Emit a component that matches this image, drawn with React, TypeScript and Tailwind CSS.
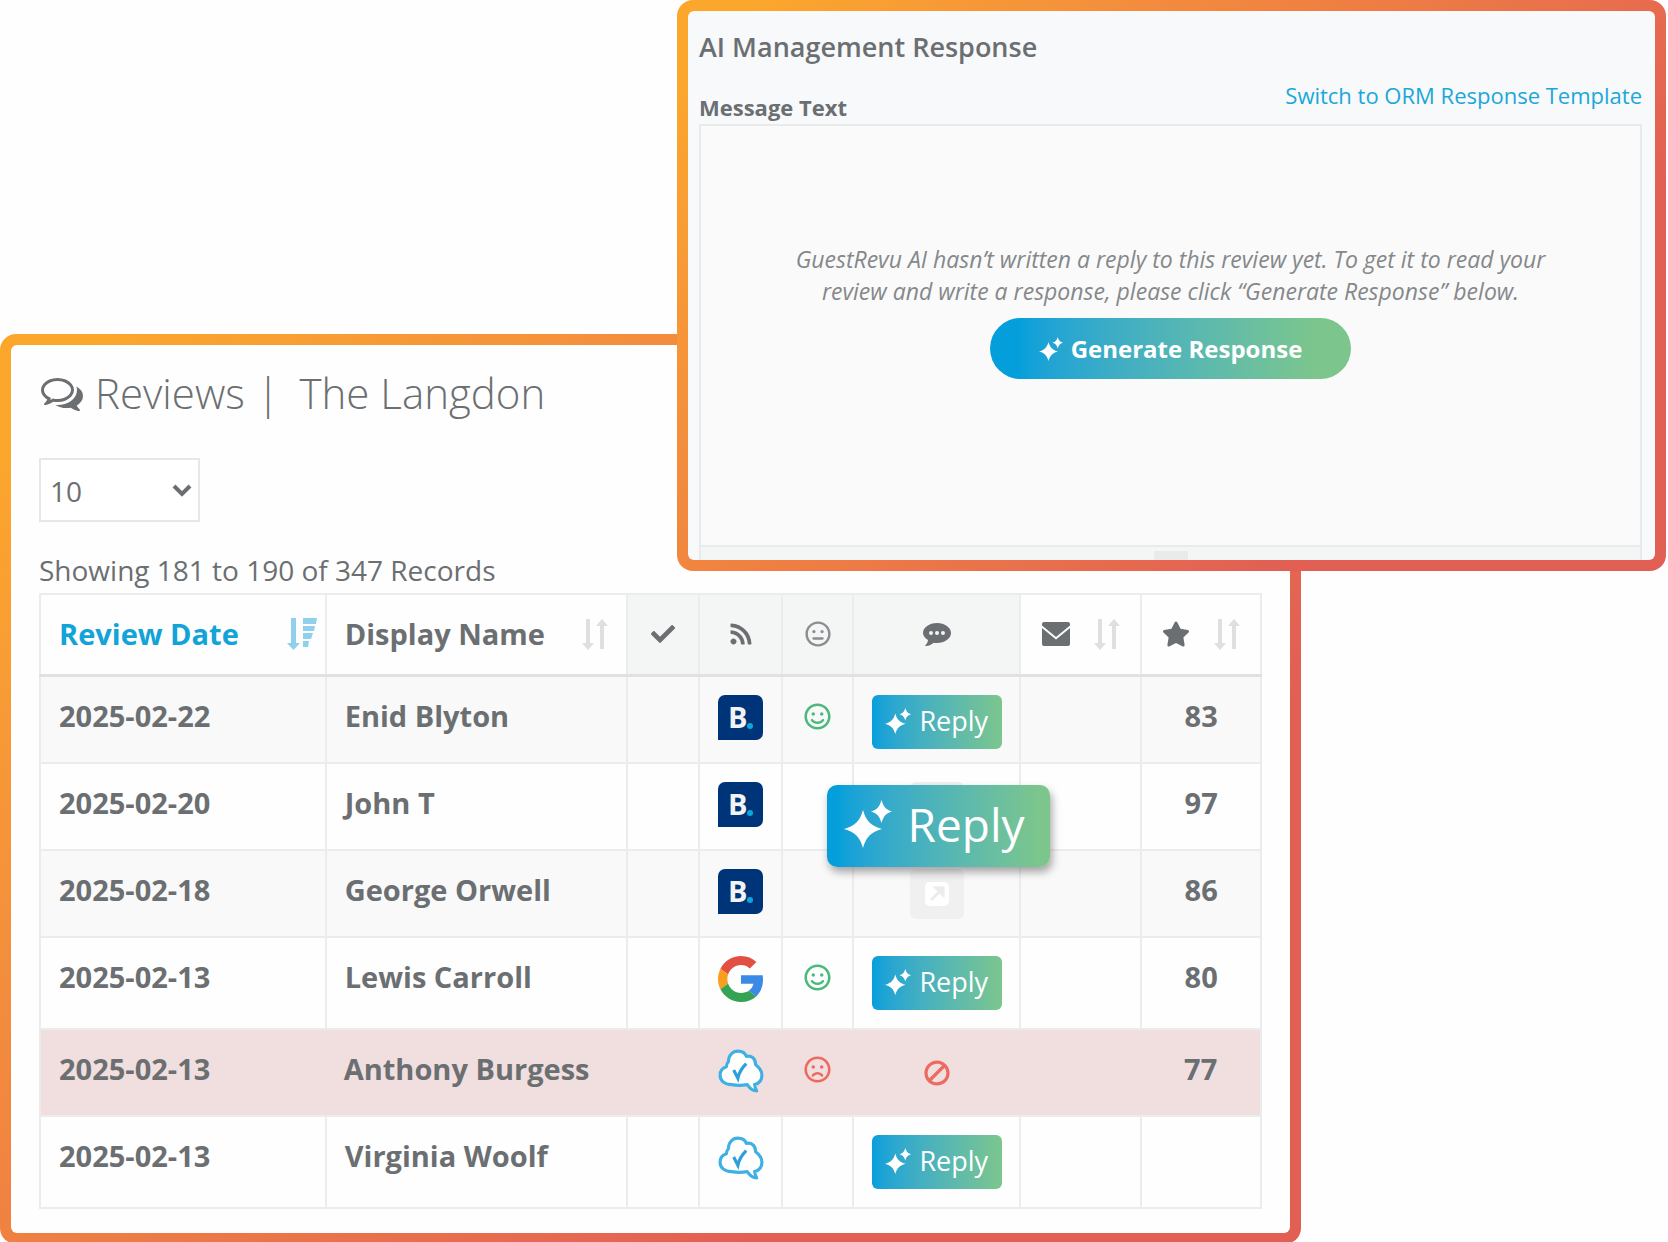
import { type ReactNode } from "react"
import { FaBan, FaCheck, FaRegFrown, FaRegMeh, FaRegSmile, FaRss, FaStar } from "react-icons/fa"

type Source = "booking" | "google" | "revu"
type Action = "reply" | "link" | "blocked"

interface Review {
  date: string
  name: string
  source: Source
  mood?: "happy" | "sad"
  action: Action
  score?: number
  tall?: boolean
}

const REVIEWS: Review[] = [
  { date: "2025-02-22", name: "Enid Blyton", source: "booking", mood: "happy", action: "reply", score: 83 },
  { date: "2025-02-20", name: "John T", source: "booking", action: "link", score: 97 },
  { date: "2025-02-18", name: "George Orwell", source: "booking", action: "link", score: 86 },
  { date: "2025-02-13", name: "Lewis Carroll", source: "google", mood: "happy", action: "reply", score: 80, tall: true },
  { date: "2025-02-13", name: "Anthony Burgess", source: "revu", mood: "sad", action: "blocked", score: 77 },
  { date: "2025-02-13", name: "Virginia Woolf", source: "revu", action: "reply", tall: true },
]

function Sparkles({ className }: { className?: string }) {
  return (
    <svg viewBox="0 0 48 48" fill="currentColor" aria-hidden="true" className={className}>
      <path d="M19 10c3 11 8 16 19 19-11 3-16 8-19 19-3-11-8-16-19-19 11-3 16-8 19-19z" />
      <path d="M37.500 0c2 6.500 4 9.500 10.500 11.500-6.500 2-8.500 5-10.500 11.500-2-6.500-4-9.500-10.500-11.500 6.500-2 8.500-5 10.500-11.500z" />
    </svg>
  )
}

function CommentsIcon({ className }: { className?: string }) {
  return (
    <svg viewBox="0 0 1792 1792" fill="currentColor" aria-hidden="true" className={className}>
      <path d="M704 384q-153 0-286 52t-211.500 141-78.500 191q0 82 53 158t149 132l97 56-35 84q34-20 62-39l44-31 53 10q78 14 153 14 153 0 286-52t211.500-141 78.500-191-78.500-191-211.500-141-286-52zm0-128q191 0 353.500 68.500t256.500 186.500 94 257-94 257-256.500 186.500-353.500 68.500q-86 0-176-16-124 88-278 128-36 9-86 16h-3q-11 0-20.500-8t-11.500-21q-1-3-1-6.500t.5-6.500 2-6l2.500-5 3.500-5.500 4-5 4.500-5 4-4.500q5-6 23-25t26-29.500 22.500-29 25-38.500 20.500-44q-124-72-195-177t-71-224q0-139 94-257t256.500-186.500 353.500-68.500zm822 1169q10 24 20.500 44t25 38.500 22.500 29 26 29.500 23 25q1 1 4 4.500t4.500 5 4 5 3.500 5.500l2.500 5 2 6 .5 6.500-1 6.500q-3 14-13 22t-22 7q-50-7-86-16-154-40-278-128-90 16-176 16-271 0-472-132 58 4 88 4 161 0 309-45t264-129q125-92 192-212t67-254q0-77-23-152 129 71 204 178t75 230q0 120-71 224.500t-195 176.500z" />
    </svg>
  )
}

function CommentDotsIcon({ className }: { className?: string }) {
  return (
    <svg viewBox="0 0 28 28" fill="currentColor" aria-hidden="true" className={className}>
      <path
        fillRule="evenodd"
        d="M14 3c7.700 0 14 4.500 14 10s-6.300 10-14 10c-1.200 0-2.300-.1-3.400-.3C8.600 24.400 6 25.700 3 26c-.6.100-.9-.6-.5-1 1.500-1.400 2.300-3 2.500-5C1.900 18.200 0 15.700 0 13 0 7.500 6.300 3 14 3zM8 11a2 2 0 100 4 2 2 0 000-4zm6 0a2 2 0 100 4 2 2 0 000-4zm6 0a2 2 0 100 4 2 2 0 000-4z"
      />
    </svg>
  )
}

function MailIcon({ className }: { className?: string }) {
  return (
    <svg viewBox="0 0 28 24" fill="currentColor" aria-hidden="true" className={className}>
      <path d="M2 0h24a2 2 0 012 2v1.500L14 15 0 3.500V2a2 2 0 012-2z" />
      <path d="M0 6l14 11.500L28 6v16a2 2 0 01-2 2H2a2 2 0 01-2-2z" />
    </svg>
  )
}

function SortIcon({ className }: { className?: string }) {
  return (
    <svg viewBox="0 0 26 32" fill="currentColor" aria-hidden="true" className={className}>
      <path d="M4 1h4v24h4l-6 7-6-7h4z" />
      <path d="M18 31h4V8h4l-6-7-6 7h4z" />
    </svg>
  )
}

function SortDescIcon({ className }: { className?: string }) {
  return (
    <svg viewBox="0 0 30 32" fill="currentColor" aria-hidden="true" className={className}>
      <path d="M4 0h5v25h4l-6.500 7L0 25h4z" />
      <path d="M16 0h14l-1 6H16zM16 8h12l-1 5H16zM16 15h10l-2 6h-8zM16 23h6l-1 6h-5z" />
    </svg>
  )
}

function BookingLogo() {
  return (
    <svg viewBox="0 0 45 45" role="img" aria-label="Booking.com" className="size-[45px]">
      <path d="M7 0h31a7 7 0 017 7v31a7 7 0 01-7 7H0V7a7 7 0 017-7z" fill="#003478" />
      <text x="10" y="33" fill="#f1f3f5" fontFamily="Open Sans" fontWeight="700" fontSize="29">
        B
      </text>
      <circle cx="32" cy="31" r="3" fill="#0ba5e0" />
    </svg>
  )
}

function GoogleLogo() {
  return (
    <svg viewBox="0 0 48 48" role="img" aria-label="Google" className="size-[46px]">
      <path fill="#e25043" d="M24 9.500c3.540 0 6.710 1.220 9.210 3.600l6.850-6.850C35.900 2.380 30.470 0 24 0 14.620 0 6.510 5.380 2.560 13.220l7.980 6.190C12.430 13.720 17.740 9.500 24 9.500z" />
      <path fill="#3b8ae6" d="M46.980 24.550c0-1.570-.15-3.090-.38-4.550H24v9.020h12.940c-.58 2.960-2.260 5.480-4.780 7.180l7.730 6c4.510-4.180 7.090-10.360 7.090-17.650z" />
      <path fill="#f99f1d" d="M10.530 28.590c-.48-1.450-.76-2.990-.76-4.590s.27-3.140.76-4.590l-7.980-6.190C.92 16.460 0 20.120 0 24c0 3.880.92 7.540 2.560 10.780l7.970-6.190z" />
      <path fill="#34a353" d="M24 48c6.480 0 11.930-2.130 15.890-5.810l-7.730-6c-2.150 1.450-4.920 2.300-8.160 2.300-6.260 0-11.570-4.220-13.470-9.910l-7.980 6.190C6.510 42.620 14.620 48 24 48z" />
    </svg>
  )
}

function RevuLogo() {
  return (
    <svg viewBox="0 0 44 44" role="img" aria-label="GuestRevu" className="size-[46px]">
      <path
        d="M10 13c0-6 4-10 9-10 4 0 7 2 8 5 5-1 9 2 9 8 4 3 6 6 6 10 0 5-3 8-7 9 0 2 1 4 2 6-4 0-7-3-9-6-5 1-10 1-15 0-7 0-11-4-11-9s3-7 6-8c0-2 1-4 2-5z"
        fill="#fff"
        stroke="#3fb0e3"
        strokeWidth="3"
        strokeLinejoin="round"
      />
      <path d="M15 21l4 8c1-5 4-10 8-14" fill="none" stroke="#2c9fdc" strokeWidth="3" />
    </svg>
  )
}

function SourceLogo({ source }: { source: Source }) {
  if (source === "booking") return <BookingLogo />
  if (source === "google") return <GoogleLogo />
  return <RevuLogo />
}

function ReplyButton() {
  return (
    <button
      type="button"
      className="flex h-[54px] w-[130px] items-center justify-center gap-2 rounded-md bg-linear-to-r from-[#049fdb] to-[#7cc68d] pb-0.5 text-[27px] font-medium text-white"
    >
      <Sparkles className="size-[26px]" />
      Reply
    </button>
  )
}

function ActionCell({ action }: { action: Action }) {
  if (action === "reply") return <ReplyButton />
  if (action === "blocked") {
    return <FaBan title="No reply possible" className="mt-3 size-[26px] -scale-x-100 text-[#ec6a5e]" />
  }
  return (
    <button
      type="button"
      aria-label="Open review"
      className="flex h-[50px] w-[54px] items-center justify-center rounded-md bg-[#f0f0f0] text-white"
    >
      <svg viewBox="0 0 24 24" className="size-6" aria-hidden="true">
        <rect width="24" height="24" rx="5" fill="currentColor" />
        <path d="M6 18l8-8M11 6h7v7z" stroke="#ececec" strokeWidth="3" fill="#ececec" />
      </svg>
    </button>
  )
}

function IconHeader({ label, shaded, children }: { label: string; shaded?: boolean; children: ReactNode }) {
  return (
    <th
      scope="col"
      aria-label={label}
      className={shaded ? "border-2 border-[#ebedec] bg-[#f4f5f5]" : "border-2 border-[#ebedec]"}
    >
      <div className="flex items-center justify-center">{children}</div>
    </th>
  )
}

function ReviewRow({ review, striped }: { review: Review; striped: boolean }) {
  const flagged = review.action === "blocked"
  const cell = flagged
    ? "border-y-2 border-[#ebedec] align-top first:border-l-2 last:border-r-2"
    : "border-2 border-[#ebedec] align-top"
  const tone = flagged ? "bg-[#f1dfdf]" : striped ? "bg-[#f9f9f9]" : ""

  return (
    <tr className={`${review.tall ? "h-[92px]" : "h-[87px]"} first:h-[88px] ${tone}`}>
      <td className={`${cell} px-[18px] pt-[19px]`}>{review.date}</td>
      <td className={`${cell} px-[18px] pt-[19px]`}>{review.name}</td>
      <td className={cell} />
      <td className={`${cell} pt-[18px]`}>
        <div className="flex justify-center">
          <SourceLogo source={review.source} />
        </div>
      </td>
      <td className={`${cell} pt-[26px]`}>
        <div className="flex justify-center">
          {review.mood === "happy" && <FaRegSmile title="Positive" className="size-[27px] text-[#4bb97c]" />}
          {review.mood === "sad" && <FaRegFrown title="Negative" className="size-[27px] text-[#ec6a5e]" />}
        </div>
      </td>
      <td className={`${cell} pt-[18px]`}>
        <div className="flex justify-center">
          <ActionCell action={review.action} />
        </div>
      </td>
      <td className={cell} />
      <td className={`${cell} pt-[19px] text-center`}>{review.score}</td>
    </tr>
  )
}

function ReviewsPanel() {
  return (
    <section className="col-span-2 col-start-1 row-start-1 mt-[334px] rounded-2xl bg-linear-135 from-[#fba72c] from-5% via-[#ef8042] via-42% to-[#e25f54] to-75% p-[11px]">
      <div className="rounded-md bg-[#fefefe] px-7 pt-[25px] pb-6">
        <h1 className="flex items-center text-[42px] leading-[46px] font-light">
          <CommentsIcon className="mr-3 ml-0.5 size-[42px]" />
          Reviews
          <span className="ml-3">|</span>
          <span className="ml-5">The Langdon</span>
        </h1>

        <div className="relative mt-[42px] h-16 w-[161px]">
          <select
            aria-label="Records per page"
            defaultValue="10"
            className="h-full w-full appearance-none border-2 border-[#e6e7e7] bg-white px-[9px] pt-0.5 text-[28px]"
          >
            <option>10</option>
            <option>25</option>
            <option>50</option>
          </select>
          <svg viewBox="0 0 20 14" className="pointer-events-none absolute top-[26px] right-2 h-[14px] w-5" aria-hidden="true">
            <path d="M2 2l8 8 8-8" fill="none" stroke="#6b6f72" strokeWidth="4" />
          </svg>
        </div>

        <p className="mt-7 text-[28px] leading-10">Showing 181 to 190 of 347 Records</p>

        <div className="relative mt-[3px]">
          <table className="w-full table-fixed border-collapse text-[29px] leading-10 font-bold">
            <colgroup>
              <col className="w-[23.4%]" />
              <col className="w-[24.7%]" />
              <col className="w-[5.9%]" />
              <col className="w-[6.8%]" />
              <col className="w-[5.8%]" />
              <col className="w-[13.7%]" />
              <col className="w-[9.9%]" />
              <col className="w-[9.8%]" />
            </colgroup>
            <thead>
              <tr className="h-[81px] border-b-3 border-b-[#e0e2e1]">
                <th scope="col" className="border-2 border-[#ebedec] pr-2 pl-[18px] text-left text-[#12a4d8]">
                  <div className="flex items-center justify-between">
                    Review Date
                    <SortDescIcon className="h-8 w-[30px] text-[#8fd0ec]" />
                  </div>
                </th>
                <th scope="col" className="border-2 border-[#ebedec] pr-[18px] pl-[18px] text-left">
                  <div className="flex items-center justify-between">
                    Display Name
                    <SortIcon className="h-8 w-[26px] text-[#dedfe0]" />
                  </div>
                </th>
                <IconHeader label="Checked" shaded>
                  <FaCheck className="size-6" />
                </IconHeader>
                <IconHeader label="Source" shaded>
                  <FaRss className="size-6" />
                </IconHeader>
                <IconHeader label="Sentiment" shaded>
                  <FaRegMeh className="size-[26px] text-[#8b8e90]" />
                </IconHeader>
                <IconHeader label="Response" shaded>
                  <CommentDotsIcon className="size-7" />
                </IconHeader>
                <IconHeader label="Email">
                  <MailIcon className="mr-6 h-6 w-7" />
                  <SortIcon className="h-8 w-[26px] text-[#dedfe0]" />
                </IconHeader>
                <IconHeader label="Score">
                  <FaStar className="mr-6 size-7" />
                  <SortIcon className="h-8 w-[26px] text-[#dedfe0]" />
                </IconHeader>
              </tr>
            </thead>
            <tbody>
              {REVIEWS.map((review, i) => (
                <ReviewRow key={review.name} review={review} striped={i % 2 === 0 && i < 4} />
              ))}
            </tbody>
          </table>

          {/* Enlarged reply button floating over the table */}
          <button
            type="button"
            className="absolute top-[192px] left-[64.4%] flex h-[82px] w-[223px] items-center justify-center gap-4 rounded-[10px] bg-linear-to-r from-[#049fdb] from-5% to-[#7cc68d] to-95% pr-2 pb-1 text-[46px] text-white shadow-[2px_5px_8px_rgba(0,0,0,0.35)]"
          >
            <Sparkles className="size-12" />
            Reply
          </button>
        </div>
      </div>
    </section>
  )
}

function ResponsePanel() {
  return (
    <section className="z-10 col-span-2 col-start-2 row-start-1 self-start rounded-2xl bg-linear-135 from-[#fba72c] from-5% via-[#ef8042] via-42% to-[#e25f54] to-75% p-[11px]">
      <div className="rounded-md bg-[#f7f9fb] pr-[13px] pl-[11px]">
        <h2 className="pt-4 text-[27px] leading-10 font-semibold">AI Management Response</h2>
        <div className="flex items-start justify-between pt-3 pb-px">
          <h3 className="pt-3 text-[22px] leading-8 font-bold">Message Text</h3>
          <a href="#template" className="text-[22px] leading-8 text-[#1ba7d9]">
            Switch to ORM Response Template
          </a>
        </div>
        <div className="flex h-[436px] flex-col items-center border-2 border-b-0 border-[#e8ebec] bg-[#fafafa] pt-[117px]">
          <p className="text-center text-[23px] leading-8 text-[#85888a] italic">
            GuestRevu AI hasn’t written a reply to this review yet. To get it to read your
            <br />
            review and write a response, please click “Generate Response” below.
          </p>
          <button
            type="button"
            className="mt-[11px] flex h-[61px] w-[361px] items-center justify-center gap-2 rounded-full bg-linear-to-r from-[#049fdb] from-8% to-[#7cc68d] to-90% text-2xl font-bold text-white"
          >
            <Sparkles className="size-6" />
            Generate Response
          </button>
          <div className="mt-auto flex h-[15px] w-full items-end justify-center border-t-2 border-[#e8ebeb] bg-[#f4f5f5]">
            <span className="h-[9px] w-[34px] bg-[#e9eaea]" />
          </div>
        </div>
      </div>
    </section>
  )
}

export default function App() {
  return (
    <main className="grid min-h-screen grid-cols-[677fr_624fr_365fr] items-start bg-[#fefefe] pr-0.5 font-['Open_Sans',sans-serif] text-[#6b6f72]">
      <ReviewsPanel />
      <ResponsePanel />
    </main>
  )
}
